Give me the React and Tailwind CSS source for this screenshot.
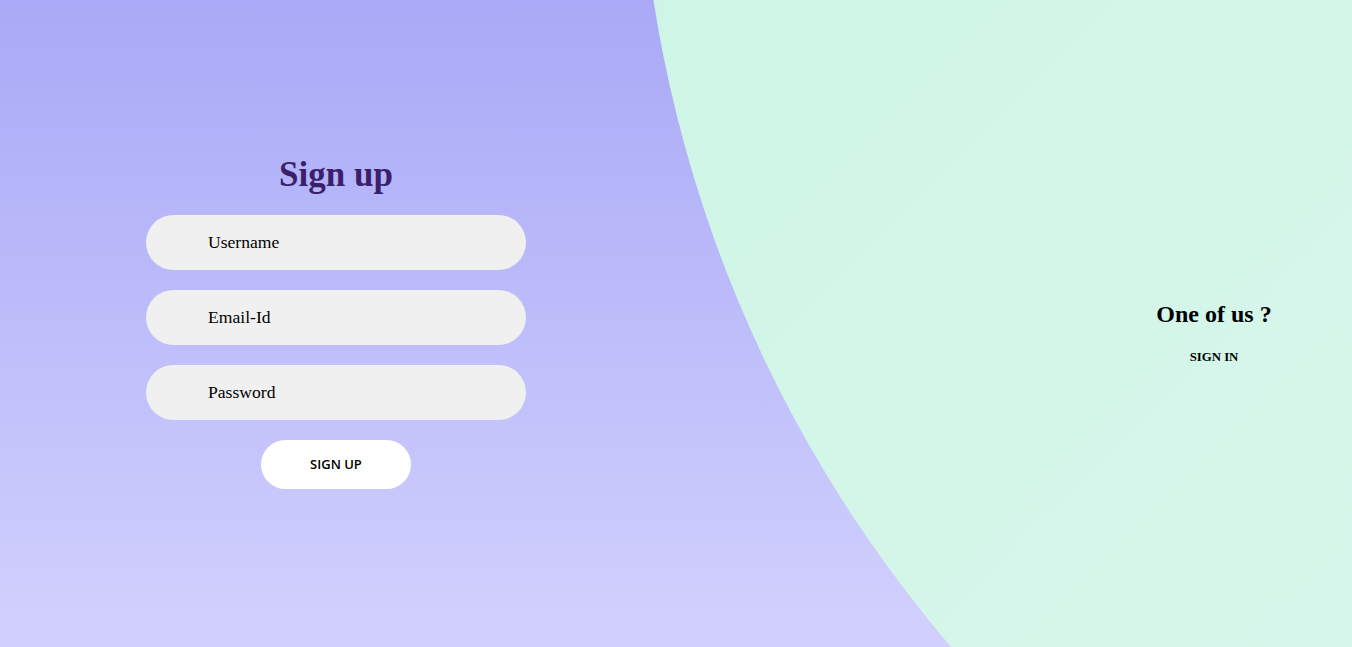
export default function App() {
  const inputs = ["Username", "Email-Id", "Password"];
  return (
    <div className="relative h-[647px] w-full overflow-hidden bg-gradient-to-b from-[#a9a9f7] to-[#d2d1fd]">
      <div className="pointer-events-none absolute left-[638px] top-[-1502px] h-[2604px] w-[2604px] rounded-full bg-gradient-to-br from-[#c2f5e0] via-[#d6f6ea] to-[#e6f9f2]" />
      <div className="relative flex h-full">
        <div className="flex w-[672px] flex-col items-center pt-[154px]">
          <h2 className="font-['Liberation_Serif',serif] text-[35px] font-bold leading-[41px] text-[#3c1f6c]">
            Sign up
          </h2>
          <div className="mt-[20px] flex flex-col gap-[20px]">
            {inputs.map((p) => (
              <div
                key={p}
                className="flex h-[55px] w-[380px] items-center rounded-full bg-[#f0f0f0] pl-[62px] font-['Liberation_Serif',serif] text-[17.6px] text-black"
              >
                {p}
              </div>
            ))}
          </div>
          <button className="mt-[20px] flex h-[49px] w-[150px] items-center justify-center rounded-full bg-white font-['Open_Sans',sans-serif] text-[13px] font-semibold text-black">
            SIGN UP
          </button>
        </div>
        <div className="flex flex-1 justify-end pr-[38px]">
          <div className="flex w-[200px] flex-col items-center pt-[300px] font-['Liberation_Serif',serif] text-black">
            <h3 className="text-[24px] font-bold leading-[28px]">One of us ?</h3>
            <button className="mt-[20px] text-[12.8px] font-bold">SIGN IN</button>
          </div>
        </div>
      </div>
    </div>
  );
}
